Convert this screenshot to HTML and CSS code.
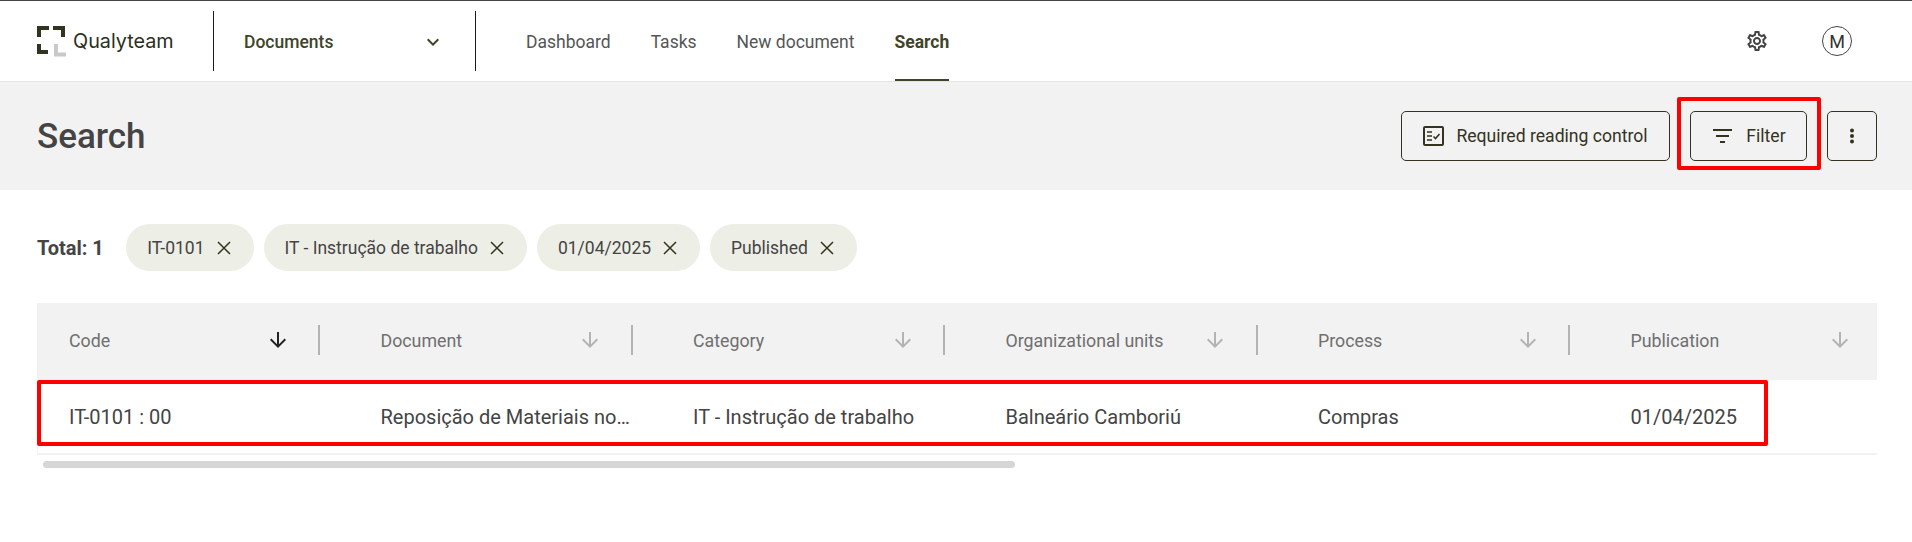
FILE: index.html
```html
<!DOCTYPE html>
<html lang="en">
<head>
    <meta charset="UTF-8">
    <meta name="viewport" content="width=device-width, initial-scale=1.0">
    <title>Search - Qualyteam</title>
    <link rel="stylesheet" href="styles.css">
</head>
<body>
    <header class="topbar">
        <a class="logo">
            <svg class="logo-mark" width="30" height="31" viewBox="0 0 30 31" fill="none" stroke-width="4">
                <path d="M2 11V2H12" stroke="#2f3521"/>
                <path d="M16 2H26V11" stroke="#2f3521"/>
                <path d="M2 18V26H11" stroke="#2f3521"/>
                <path d="M19 18V28.5H29" stroke="#c9c9c9"/>
            </svg>
            <span class="logo-text">Qualyteam</span>
        </a>
        <div class="module">
            <span>Documents</span>
            <svg width="24" height="24" viewBox="0 0 24 24" fill="#3f4528"><path d="M7.41 8.59 12 13.17l4.59-4.58L18 10l-6 6-6-6z"/></svg>
        </div>
        <nav class="nav">
            <a>Dashboard</a>
            <a>Tasks</a>
            <a>New document</a>
            <a class="active">Search</a>
        </nav>
        <div class="topbar-right">
            <svg width="24" height="24" viewBox="0 0 24 24" fill="#444"><path d="M19.43 12.98c.04-.32.07-.64.07-.98 0-.34-.03-.66-.07-.98l2.11-1.65c.19-.15.24-.42.12-.64l-2-3.46c-.09-.16-.26-.25-.44-.25-.06 0-.12.01-.17.03l-2.49 1c-.52-.4-1.08-.73-1.69-.98l-.38-2.65C14.46 2.18 14.25 2 14 2h-4c-.25 0-.46.18-.49.42l-.38 2.65c-.61.25-1.17.59-1.69.98l-2.49-1c-.06-.02-.12-.03-.18-.03-.17 0-.34.09-.43.25l-2 3.46c-.13.22-.07.49.12.64l2.11 1.65c-.04.32-.07.65-.07.98 0 .33.03.66.07.98l-2.11 1.65c-.19.15-.24.42-.12.64l2 3.46c.09.16.26.25.44.25.06 0 .12-.01.17-.03l2.49-1c.52.4 1.08.73 1.69.98l.38 2.65c.03.24.24.42.49.42h4c.25 0 .46-.18.49-.42l.38-2.65c.61-.25 1.17-.59 1.69-.98l2.49 1c.06.02.12.03.18.03.17 0 .34-.09.43-.25l2-3.46c.12-.22.07-.49-.12-.64l-2.11-1.65zm-1.98-1.71c.04.31.05.52.05.73 0 .21-.02.43-.05.73l-.14 1.13.89.7 1.08.84-.7 1.21-1.27-.51-1.04-.42-.9.68c-.43.32-.84.56-1.25.73l-1.06.43-.16 1.13-.2 1.35h-1.4l-.19-1.35-.16-1.13-1.06-.43c-.43-.18-.83-.41-1.23-.71l-.91-.7-1.06.43-1.27.51-.7-1.21 1.08-.84.89-.7-.14-1.13c-.03-.31-.05-.54-.05-.74s.02-.43.05-.73l.14-1.13-.89-.7-1.08-.84.7-1.21 1.27.51 1.04.42.9-.68c.43-.32.84-.56 1.25-.73l1.06-.43.16-1.13.2-1.35h1.39l.19 1.35.16 1.13 1.06.43c.43.18.83.41 1.23.71l.91.7 1.06-.43 1.27-.51.7 1.21-1.07.85-.89.7.14 1.13zM12 8c-2.21 0-4 1.79-4 4s1.79 4 4 4 4-1.79 4-4-1.79-4-4-4zm0 6c-1.1 0-2-.9-2-2s.9-2 2-2 2 .9 2 2-.9 2-2 2z"/></svg>
            <span class="avatar">M</span>
        </div>
    </header>

    <section class="page-head">
        <h1>Search</h1>
        <div class="actions">
            <button class="btn">
                <svg width="21" height="20" viewBox="0 0 21 20" fill="none" stroke="#33331f">
                    <rect x="1" y="1" width="19" height="18" rx="1" stroke-width="2"/>
                    <path d="M4 6h5M4 10h5M4 14h5" stroke-width="1.6"/>
                    <path d="M10.5 10.5l2 2 4-4.5" stroke-width="1.6"/>
                </svg>
                Required reading control
            </button>
            <button class="btn btn-filter">
                <svg width="19" height="14" viewBox="0 0 19 14" fill="#33331f"><path d="M0 0h19v2H0zM3 6h13v2H3zM7 12h5v2H7z"/></svg>
                Filter
            </button>
            <button class="btn btn-more">
                <svg width="24" height="24" viewBox="0 0 24 24" fill="#33331f"><circle cx="12" cy="6.5" r="2"/><circle cx="12" cy="12" r="2"/><circle cx="12" cy="17.5" r="2"/></svg>
            </button>
        </div>
    </section>

    <section class="filters">
        <strong class="total">Total: 1</strong>
        <span class="chip">IT-0101 <svg class="chip-x" width="14" height="14" viewBox="0 0 14 14"><path d="M1 1l12 12M13 1L1 13"/></svg></span>
        <span class="chip">IT - Instrução de trabalho <svg class="chip-x" width="14" height="14" viewBox="0 0 14 14"><path d="M1 1l12 12M13 1L1 13"/></svg></span>
        <span class="chip">01/04/2025 <svg class="chip-x" width="14" height="14" viewBox="0 0 14 14"><path d="M1 1l12 12M13 1L1 13"/></svg></span>
        <span class="chip">Published <svg class="chip-x" width="14" height="14" viewBox="0 0 14 14"><path d="M1 1l12 12M13 1L1 13"/></svg></span>
    </section>

    <section class="results">
        <div class="table-scroll">
            <div class="table-row table-head">
                <div class="th"><span>Code</span><svg class="sort sort-on" width="24" height="24" viewBox="0 0 24 24"><path d="M20 12l-1.41-1.41L13 16.17V4h-2v12.17l-5.58-5.59L4 12l8 8 8-8z"/></svg></div>
                <div class="th"><span>Document</span><svg class="sort" width="24" height="24" viewBox="0 0 24 24"><path d="M20 12l-1.41-1.41L13 16.17V4h-2v12.17l-5.58-5.59L4 12l8 8 8-8z"/></svg></div>
                <div class="th"><span>Category</span><svg class="sort" width="24" height="24" viewBox="0 0 24 24"><path d="M20 12l-1.41-1.41L13 16.17V4h-2v12.17l-5.58-5.59L4 12l8 8 8-8z"/></svg></div>
                <div class="th"><span>Organizational units</span><svg class="sort" width="24" height="24" viewBox="0 0 24 24"><path d="M20 12l-1.41-1.41L13 16.17V4h-2v12.17l-5.58-5.59L4 12l8 8 8-8z"/></svg></div>
                <div class="th"><span>Process</span><svg class="sort" width="24" height="24" viewBox="0 0 24 24"><path d="M20 12l-1.41-1.41L13 16.17V4h-2v12.17l-5.58-5.59L4 12l8 8 8-8z"/></svg></div>
                <div class="th"><span>Publication</span><svg class="sort" width="24" height="24" viewBox="0 0 24 24"><path d="M20 12l-1.41-1.41L13 16.17V4h-2v12.17l-5.58-5.59L4 12l8 8 8-8z"/></svg></div>
            </div>
            <div class="table-row table-body">
                <div class="td">IT-0101 : 00</div>
                <div class="td">Reposição de Materiais no…</div>
                <div class="td">IT - Instrução de trabalho</div>
                <div class="td">Balneário Camboriú</div>
                <div class="td">Compras</div>
                <div class="td">01/04/2025</div>
            </div>
        </div>
        <div class="scrollbar"><div class="scroll-thumb"></div></div>
        <div class="row-mark"></div>
    </section>
</body>
</html>
```

FILE: styles.css
```css
* {
    margin: 0;
    padding: 0;
    box-sizing: border-box;
}

body {
    font-family: Roboto, "Liberation Sans", sans-serif;
    color: #444;
    background-color: #fff;
    height: 542px;
    overflow: hidden;
}

.topbar {
    display: flex;
    align-items: center;
    height: 82px;
    border-top: 1px solid #444;
    border-bottom: 1px solid #e4e4e4;
    padding-left: 37px;
}

.logo {
    display: flex;
    align-items: flex-start;
    width: 176px;
    height: 31px;
}

.logo-text {
    font-family: Inter, sans-serif;
    font-size: 19.8px;
    color: #2b3020;
    margin-left: 6px;
    line-height: 30px;
}

.module {
    display: flex;
    align-items: center;
    justify-content: space-between;
    width: 263px;
    height: 60px;
    padding: 2px 30px 0 30px;
    border-left: 1px solid #1c1c1c;
    border-right: 1px solid #1c1c1c;
    font-size: 17.5px;
    font-weight: 500;
    color: #3f4528;
}

.nav {
    display: flex;
    gap: 40px;
    height: 80px;
    margin-left: 50px;
}

.nav a {
    display: flex;
    align-items: center;
    padding-top: 2px;
    font-size: 17.5px;
    color: #555;
}

.nav a.active {
    font-weight: 700;
    color: #3f4528;
    border-bottom: 2px solid #3f4528;
    padding-top: 4px;
}

.topbar-right {
    display: flex;
    align-items: center;
    gap: 53px;
    margin-left: auto;
    margin-right: 60px;
}

.avatar {
    display: flex;
    align-items: center;
    justify-content: center;
    width: 30px;
    height: 30px;
    border: 1px solid #444;
    border-radius: 50%;
    font-size: 18px;
    color: #333;
}

.page-head {
    display: flex;
    align-items: center;
    justify-content: space-between;
    height: 108px;
    padding: 0 35px 0 37px;
    background-color: #f2f2f2;
}

h1 {
    font-size: 35px;
    font-weight: 500;
    color: #444;
}

.actions {
    display: flex;
    gap: 20px;
}

.btn {
    display: flex;
    align-items: center;
    justify-content: center;
    gap: 12px;
    width: 269px;
    height: 50px;
    font-family: Roboto, sans-serif;
    font-size: 17.6px;
    color: #33331f;
    background: transparent;
    border: 1px solid #33331f;
    border-radius: 5px;
}

.btn-filter {
    position: relative;
    gap: 14px;
    width: 117px;
    padding-left: 2px;
}

.btn-filter::after {
    content: "";
    position: absolute;
    top: -15px;
    bottom: -10px;
    left: -14px;
    right: -15px;
    border: 4px solid #f00;
    border-radius: 2px;
}

.btn-more {
    width: 50px;
}

.filters {
    display: flex;
    align-items: center;
    gap: 10px;
    height: 47px;
    margin: 34px 0 32px;
    padding-left: 37px;
}

.total {
    font-size: 20px;
    font-weight: 700;
    margin-right: 12.5px;
}

.chip {
    display: flex;
    align-items: center;
    gap: 12px;
    height: 47px;
    padding: 0 23px 0 21px;
    border-radius: 24px;
    background-color: #edeee6;
    font-size: 17.5px;
    color: #444;
}

.chip-x {
    stroke: #33331f;
    stroke-width: 1.5;
}

.results {
    position: relative;
    padding: 0 35px 0 37px;
}

.table-scroll {
    overflow: hidden;
    border-bottom: 2px solid #f2f2f2;
}

.table-row {
    display: grid;
    grid-template-columns: repeat(6, 312.5px);
}

.table-head {
    height: 77px;
    background-color: #f2f2f2;
    width: 1875px;
}

.th {
    display: flex;
    align-items: center;
    justify-content: space-between;
    padding: 0 60px 3px 31px;
    position: relative;
    font-size: 17.8px;
    color: #6f6f6f;
}

.th:first-child,
.td:first-child {
    padding-left: 32px;
}

.th:not(:last-child)::after {
    content: "";
    position: absolute;
    top: 22px;
    right: 29.5px;
    width: 2px;
    height: 30px;
    background-color: #b3b3b3;
}

.sort {
    fill: #b3b3b3;
}

.sort-on {
    fill: #222;
}

.table-body {
    height: 73px;
    align-items: center;
    box-shadow: inset 1px 0 0 #f2f2f2;
}

.td {
    padding: 0 31px;
    font-size: 20px;
    color: #444;
    white-space: nowrap;
}

.scrollbar {
    height: 7px;
    margin: 6px 0 0 6px;
}

.scroll-thumb {
    width: 972px;
    height: 7px;
    border-radius: 4px;
    background-color: #d6d6d6;
}

.row-mark {
    position: absolute;
    top: 77px;
    left: 37px;
    width: 1731px;
    height: 66px;
    border: 4px solid #f00;
    border-radius: 2px;
}
```
